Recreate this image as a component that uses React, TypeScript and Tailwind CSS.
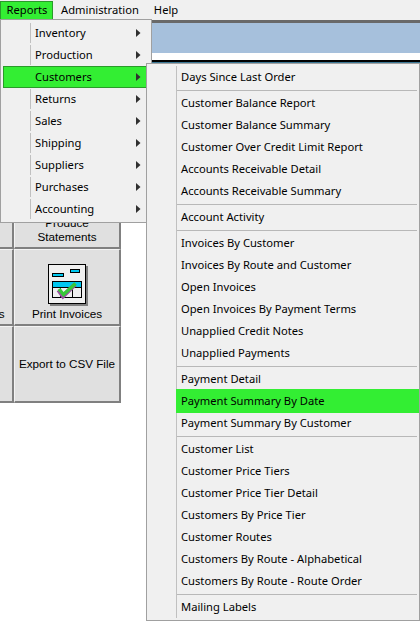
import React from "react";

const mainItems = ["Inventory", "Production", "Customers", "Returns", "Sales", "Shipping", "Suppliers", "Purchases", "Accounting"];

const groups = [
  ["Days Since Last Order"],
  ["Customer Balance Report", "Customer Balance Summary", "Customer Over Credit Limit Report", "Accounts Receivable Detail", "Accounts Receivable Summary"],
  ["Account Activity"],
  ["Invoices By Customer", "Invoices By Route and Customer", "Open Invoices", "Open Invoices By Payment Terms", "Unapplied Credit Notes", "Unapplied Payments"],
  ["Payment Detail", "Payment Summary By Date", "Payment Summary By Customer"],
  ["Customer List", "Customer Price Tiers", "Customer Price Tier Detail", "Customers By Price Tier", "Customer Routes", "Customers By Route - Alphabetical", "Customers By Route - Route Order"],
  ["Mailing Labels"],
];

function Arrow() {
  return (
    <svg width="5" height="8" viewBox="0 0 5 8" className="shrink-0">
      <polygon points="0,0 4.5,4 0,8" fill="#303030" />
    </svg>
  );
}

function PrintIcon() {
  return (
    <svg width="40" height="42" viewBox="0 0 40 42" className="ml-[2px]">
      <rect x="2" y="2" width="38" height="40" fill="#808080" />
      <rect x="0.5" y="0.5" width="37" height="39" fill="#f0f0f0" stroke="#000" />
      <rect x="4.5" y="9.5" width="11" height="3" fill="#00c8f0" stroke="#000" />
      <rect x="22.5" y="5.5" width="9" height="3" fill="#00c8f0" stroke="#000" />
      <rect x="4.5" y="17.5" width="29" height="16" fill="#f0f0f0" stroke="#000" />
      <rect x="5" y="18" width="28" height="5" fill="#00c8f0" />
      <path d="M4.5 23.5H33.5M12.5 23.5V33.5M24.5 23.5V33.5" stroke="#000" fill="none" />
      <path d="M10.5 26L15 32L27 20.5" stroke="#9a4fa0" strokeWidth="4.5" fill="none" />
      <path d="M11 25L15.5 30.5L27.5 19.5" stroke="#38c838" strokeWidth="3.5" fill="none" />
    </svg>
  );
}

function CellButton({ children, className = "" }: { children?: React.ReactNode; className?: string }) {
  return (
    <div className={`flex flex-col items-center overflow-hidden bg-[#e0e0e0] border-l border-t border-l-[#f4f4f4] border-t-[#f4f4f4] border-r-2 border-b-2 border-r-[#808080] border-b-[#808080] text-[11.7px] leading-[14px] text-black ${className}`}>
      {children}
    </div>
  );
}

export default function App() {
  return (
    <div className="relative w-[420px] h-[621px] overflow-hidden bg-[#f0f0f0] font-['Noto_Sans',sans-serif] text-[11.2px] text-black">
      {/* menu bar */}
      <div className="flex h-[20px] items-center">
        <div className="flex h-[19px] w-[53px] items-center justify-center border border-[#2a9a2a] bg-[#33ee33] pl-[1px]">Reports</div>
        <div className="ml-[8px]">Administration</div>
        <div className="ml-[15px]">Help</div>
      </div>

      {/* window header */}
      <div className="h-[3px] bg-[#696969]" />
      <div className="h-[30px] bg-[#a6c0dc]" />
      <div className="h-[7px] bg-white" />
      <div className="h-[2px] bg-black" />
      <div className="h-[2px] bg-[#3c7896]" />

      {/* body */}
      <div className="h-[557px] bg-white font-['Liberation_Sans',sans-serif]">
        <div className="ml-[-90px] grid w-[211px] grid-cols-[104px_107px] grid-rows-[repeat(3,77px)] pt-[108px]">
          <CellButton />
          <CellButton className="justify-end pb-[3px]">
            <div className="text-center">Produce<br />Statements</div>
          </CellButton>
          <CellButton className="justify-end pb-[3px]">Print Statements</CellButton>
          <CellButton className="pt-[14px]">
            <PrintIcon />
            <div className="mt-[1px]">Print Invoices</div>
          </CellButton>
          <CellButton />
          <CellButton className="justify-center">Export to CSV File</CellButton>
        </div>
      </div>

      {/* main dropdown */}
      <div className="absolute left-0 top-[19px] w-[152px] border border-[#a0a0a0] bg-[#f0f0f0] p-[2px]">
        {mainItems.map((label) => {
          const active = label === "Customers";
          return (
            <div key={label} className={`flex h-[22px] items-center ${active ? "border border-[#2a9a2a] bg-[#33ee33]" : "border border-transparent"}`}>
              <div className="w-[26px] shrink-0" />
              <div className={`flex h-full flex-1 items-center border-l pl-[4px] pr-[7px] ${active ? "border-transparent" : "border-[#c0c0c0]"}`}>
                <span className="flex-1">{label}</span>
                <Arrow />
              </div>
            </div>
          );
        })}
      </div>

      {/* customers submenu */}
      <div className="absolute left-[146px] top-[63px] w-[274px] border border-[#a0a0a0] bg-[#f0f0f0] pt-[2px] pb-[2px] pl-[29px]">
        {groups.map((group, gi) => (
          <div key={gi}>
            {gi > 0 && (
              <div className="flex h-[4px] items-center border-l border-[#c0c0c0] pr-[2px]">
                <div className="h-px flex-1 bg-[#b8b8b8]" />
              </div>
            )}
            {group.map((label) =>
              label === "Payment Summary By Date" ? (
                <div key={label} className="relative -my-px flex h-[24px] items-center border-l border-[#33ee33] bg-[#33ee33] pl-[4px]">
                  {label}
                </div>
              ) : (
                <div key={label} className="flex h-[22px] items-center border-l border-[#c0c0c0] pl-[4px]">
                  {label}
                </div>
              )
            )}
          </div>
        ))}
      </div>
    </div>
  );
}
